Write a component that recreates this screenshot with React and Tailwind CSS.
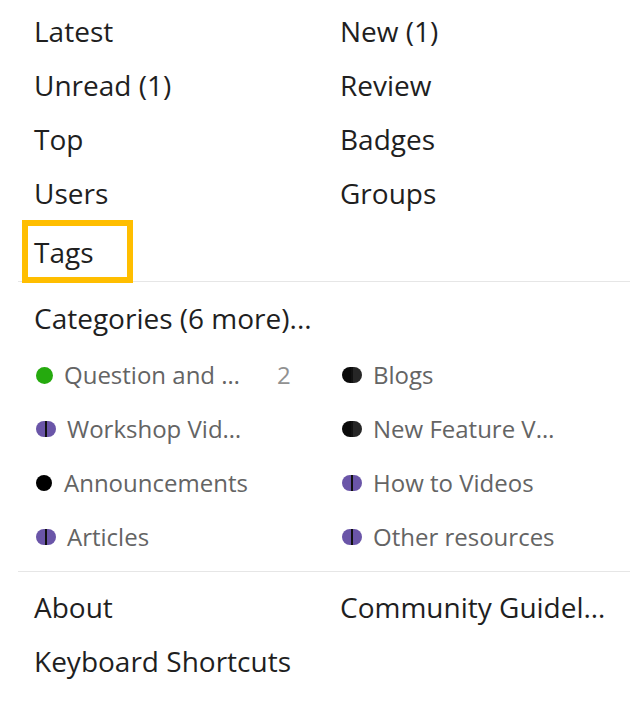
import React from "react";

const font = { fontFamily: '"Open Sans", "Noto Sans", sans-serif' };

function TopRow({ left, right, boxed }) {
  return (
    <div className="grid grid-cols-2 h-[54px]">
      <div className="flex items-center pl-4 text-[28px] text-[#1f1f1f]">
        {boxed ? (
          <span className="-ml-[12px] flex h-[63px] w-[111px] items-center border-[6px] border-[#ffbe00] pl-[6px]">
            {left}
          </span>
        ) : (
          left
        )}
      </div>
      <div className="flex items-center pl-4 text-[28px] text-[#1f1f1f] whitespace-nowrap">{right}</div>
    </div>
  );
}

function Dot({ kind }) {
  if (kind === "green") return <span className="mr-[11px] ml-[2px] inline-block h-[17px] w-[17px] rounded-full bg-[#25aa0e]" />;
  if (kind === "black") return <span className="mr-[12px] ml-[2px] inline-block h-[16px] w-[16px] rounded-full bg-black" />;
  const l = kind === "purple" ? "bg-[#6a55a8]" : "bg-[#0a0a0a]";
  const r = kind === "purple" ? "bg-[#6a55a8]" : "bg-[#262626]";
  return (
    <span className="mr-[11px] ml-[2px] inline-flex h-[16px] w-[20px] items-stretch">
      <span className={`w-[9px] rounded-l-full ${l}`} />
      <span className="w-[2px] bg-[#111111]" />
      <span className={`w-[9px] rounded-r-full ${r}`} />
    </span>
  );
}

function Cat({ dot, name, count }) {
  return (
    <div className="flex h-[54px] items-center pl-4 text-[24px] text-[#646464]">
      <Dot kind={dot} />
      <span className="w-[213px] whitespace-nowrap">{name}</span>
      {count && <span className="text-[24px] text-[#919191]">{count}</span>}
    </div>
  );
}

export default function App() {
  return (
    <div className="h-[706px] w-[638px] bg-white pl-[18px] pr-[8px]" style={font}>
      <div className="pt-[4px] pb-[7px] border-b border-[#e6e6e6]">
        <TopRow left="Latest" right="New (1)" />
        <TopRow left="Unread (1)" right="Review" />
        <TopRow left="Top" right="Badges" />
        <TopRow left="Users" right="Groups" />
        <TopRow left="Tags" boxed />
      </div>
      <div className="pt-[9px] pb-[7px] border-b border-[#e6e6e6]">
        <div className="flex h-[57px] items-center pb-[3px] pl-4 text-[28px] text-[#1f1f1f]">
          Categories (6 more)...
        </div>
        <div className="grid grid-cols-2">
          <Cat dot="green" name="Question and …" count="2" />
          <Cat dot="blackSplit" name="Blogs" />
          <Cat dot="purple" name="Workshop Vid…" />
          <Cat dot="blackSplit" name="New Feature V…" />
          <Cat dot="black" name="Announcements" />
          <Cat dot="purple" name="How to Videos" />
          <Cat dot="purple" name="Articles" />
          <Cat dot="purple" name="Other resources" />
        </div>
      </div>
      <div className="pt-[8px]">
        <TopRow left="About" right="Community Guidel…" />
        <TopRow left="Keyboard Shortcuts" />
      </div>
    </div>
  );
}
